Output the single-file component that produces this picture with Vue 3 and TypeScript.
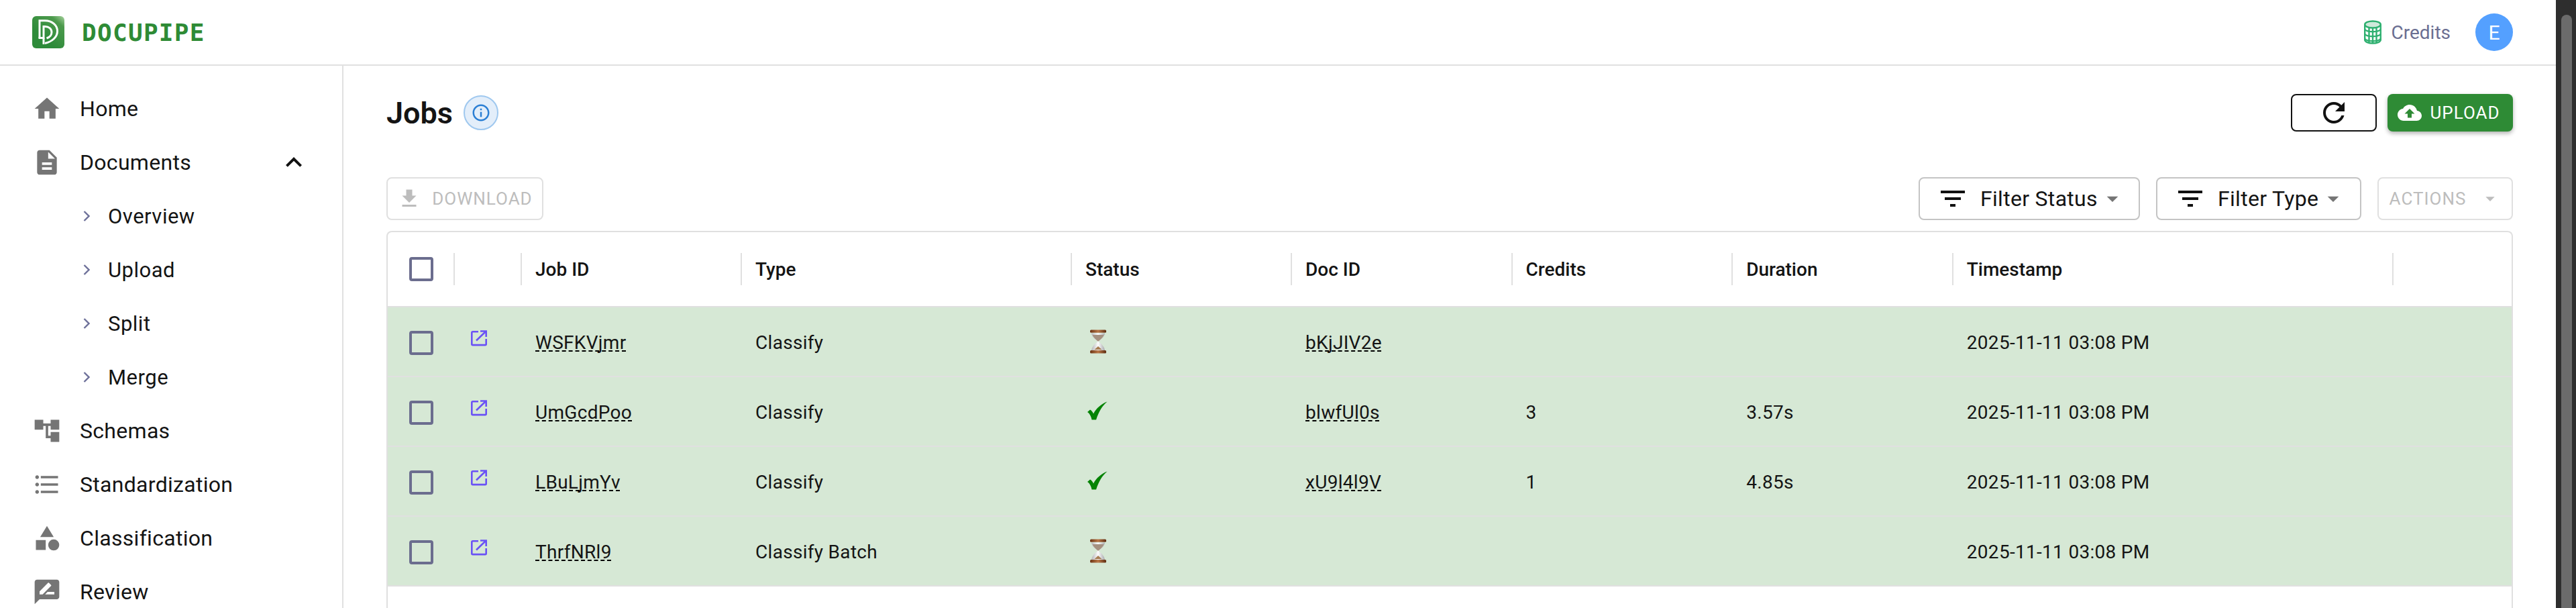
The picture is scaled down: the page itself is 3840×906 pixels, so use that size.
<script setup lang="ts">
interface NavItem {
  label: string;
  icon?: string;
  sub?: boolean;
}

const nav: NavItem[] = [
  { label: 'Home', icon: 'M10 20v-6h4v6h5v-8h3L12 3 2 12h3v8z' },
  { label: 'Documents', icon: 'M14 2H6c-1.1 0-1.99.9-1.99 2L4 20c0 1.1.89 2 1.99 2H18c1.1 0 2-.9 2-2V8l-6-6zm2 16H8v-2h8v2zm0-4H8v-2h8v2zm-3-5V3.5L18.5 9H13z' },
  { label: 'Overview', sub: true },
  { label: 'Upload', sub: true },
  { label: 'Split', sub: true },
  { label: 'Merge', sub: true },
  { label: 'Schemas', icon: 'M22 11V3h-7v3H9V3H2v8h7V8h2v10h4v3h7v-8h-7v3h-2V8h2v3z' },
  { label: 'Standardization', icon: 'M4 10.5c-.83 0-1.5.67-1.5 1.5s.67 1.5 1.5 1.5 1.5-.67 1.5-1.5-.67-1.5-1.5-1.5zm0-6c-.83 0-1.5.67-1.5 1.5S3.17 7.5 4 7.5 5.5 6.83 5.5 6 4.83 4.5 4 4.5zm0 12c-.83 0-1.5.68-1.5 1.5s.68 1.5 1.5 1.5 1.5-.68 1.5-1.5-.67-1.5-1.5-1.5zM7 19h14v-2H7v2zm0-6h14v-2H7v2zm0-8v2h14V5H7z' },
  { label: 'Classification', icon: 'M12 2l-5.5 9h11zM17.5 13a4.5 4.5 0 1 0 0 9 4.5 4.5 0 0 0 0-9zM3 13.5h8v8H3z' },
  { label: 'Review', icon: 'M20 2H4c-1.1 0-2 .9-2 2v18l4-4h14c1.1 0 2-.9 2-2V4c0-1.1-.9-2-2-2zM6 14v-2.47l6.88-6.88c.2-.2.51-.2.71 0l1.77 1.77c.2.2.2.51 0 .71L8.47 14H6zm12 0h-7.5l2-2H18v2z' },
];

const columns = [
  { label: '', width: 100 },
  { label: '', width: 100 },
  { label: 'Job ID', width: 328 },
  { label: 'Type', width: 492 },
  { label: 'Status', width: 328 },
  { label: 'Doc ID', width: 328.6 },
  { label: 'Credits', width: 328.6 },
  { label: 'Duration', width: 328.6 },
  { label: 'Timestamp', width: 656 },
];

const rows = [
  { id: 'WSFKVjmr', type: 'Classify', done: false, doc: 'bKjJIV2e', credits: '', duration: '' },
  { id: 'UmGcdPoo', type: 'Classify', done: true, doc: 'blwfUl0s', credits: '3', duration: '3.57s' },
  { id: 'LBuLjmYv', type: 'Classify', done: true, doc: 'xU9l4l9V', credits: '1', duration: '4.85s' },
  { id: 'ThrfNRl9', type: 'Classify Batch', done: false, doc: '', credits: '', duration: '' },
];

const stamp = '2025-11-11 03:08 PM';
const filterPath = 'M10 18h4v-2h-4v2zM3 6v2h18V6H3zm3 7h12v-2H6v2z';
</script>

<template>
  <div class="page">
    <div class="app">
      <header class="topbar">
        <div class="brand">
          <svg class="logo" viewBox="0 0 48 48">
            <defs>
              <linearGradient id="logoBg" x1="1" y1="0" x2="0.4" y2="0.7">
                <stop offset="0" stop-color="#a9d3a0" />
                <stop offset="0.3" stop-color="#4c9a4c" />
                <stop offset="1" stop-color="#2e8b3a" />
              </linearGradient>
            </defs>
            <rect width="48" height="48" rx="6" fill="url(#logoBg)" />
            <path d="M11 32.500V6.700H19C30 6.700 37.500 14 37.500 22.500C37.500 31 30 38 19 40.500" fill="none" stroke="#fff" stroke-width="3" />
            <path d="M9.500 32.500H17V15.500H19C25 15.500 29 19 29 24C29 28.500 26 31.500 21.500 33" fill="none" stroke="#fff" stroke-width="3" />
            <path d="M17 32.500V42" fill="none" stroke="#fff" stroke-width="3" />
          </svg>
          <span class="brand-name">DOCUPIPE</span>
        </div>
        <div class="account">
          <svg class="coin" viewBox="0 0 26 36" fill="none" stroke="#2fb070" stroke-width="2.400">
            <ellipse cx="13" cy="6.500" rx="11.800" ry="5" fill="#cfe9da" />
            <path d="M1.200 6.500v23c0 2.800 5.300 5 11.800 5s11.800-2.200 11.800-5v-23" />
            <path d="M1.200 14c2 2.200 6.300 3.200 11.800 3.200S22.800 16.200 24.800 14M1.200 21c2 2.200 6.300 3.200 11.800 3.200S22.800 23.200 24.800 21M1.200 28c2 2.200 6.300 3.200 11.800 3.200S22.800 30.200 24.800 28" />
            <path d="M7.500 11v23M18.500 11v23M13 12v22" />
          </svg>
          <span class="credits-link">Credits</span>
          <div class="avatar">E</div>
        </div>
      </header>

      <div class="body">
        <aside class="sidebar">
          <div v-for="item in nav" :key="item.label" class="nav-item" :class="{ sub: item.sub }">
            <svg v-if="item.sub" class="chevron" viewBox="0 0 10 16" fill="none" stroke="#6d7099" stroke-width="2.400">
              <path d="M1.500 1L8.500 8L1.500 15" />
            </svg>
            <svg v-else class="nav-icon" viewBox="0 0 24 24"><path :d="item.icon" /></svg>
            <span class="nav-label">{{ item.label }}</span>
            <svg v-if="item.label === 'Documents'" class="expand" viewBox="0 0 24 24">
              <path d="M12 8l-6 6 1.410 1.410L12 10.830l4.590 4.580L18 14z" />
            </svg>
          </div>
        </aside>

        <main class="content">
          <div class="title-row">
            <div class="title-left">
              <h1>Jobs</h1>
              <div class="info">
                <svg viewBox="0 0 24 24" width="30" height="30">
                  <path fill="#2b7fd4" d="M11 7h2v2h-2zm0 4h2v6h-2zm1-9C6.480 2 2 6.480 2 12s4.480 10 10 10 10-4.480 10-10S17.520 2 12 2zm0 18c-4.410 0-8-3.590-8-8s3.590-8 8-8 8 3.590 8 8-3.590 8-8 8z" />
                </svg>
              </div>
            </div>
            <div class="title-actions">
              <button class="refresh">
                <svg viewBox="0 0 24 24" width="48" height="48">
                  <path fill="#111" d="M17.650 6.350C16.200 4.900 14.210 4 12 4c-4.420 0-7.990 3.580-7.990 8s3.570 8 7.990 8c3.730 0 6.840-2.550 7.730-6h-2.080c-.82 2.330-3.040 4-5.650 4-3.310 0-6-2.690-6-6s2.690-6 6-6c1.660 0 3.140.69 4.220 1.780L13 11h7V4l-2.350 2.350z" />
                </svg>
              </button>
              <button class="upload">
                <svg viewBox="0 0 24 24" width="36" height="36">
                  <path fill="#fff" d="M19.350 10.040C18.670 6.590 15.640 4 12 4 9.110 4 6.600 5.640 5.350 8.040 2.340 8.360 0 10.910 0 14c0 3.310 2.690 6 6 6h13c2.760 0 5-2.240 5-5 0-2.640-2.050-4.780-4.650-4.960zM14 13v4h-4v-4H7l5-5 5 5h-3z" />
                </svg>
                UPLOAD
              </button>
            </div>
          </div>

          <div class="toolbar">
            <button class="btn-disabled download">
              <svg viewBox="0 0 24 24" width="36" height="36">
                <path fill="#bdbdbd" d="M19 9h-4V3H9v6H5l7 7 7-7zM5 18v2h14v-2H5z" />
              </svg>
              DOWNLOAD
            </button>
            <div class="toolbar-right">
              <button class="filter status">
                <svg viewBox="0 0 24 24" width="48" height="48"><path fill="#111" :d="filterPath" /></svg>
                <span class="filter-label">Filter Status</span>
                <svg viewBox="0 0 24 24" width="40" height="40"><path fill="#757575" d="M7 10l5 5 5-5z" /></svg>
              </button>
              <button class="filter type">
                <svg viewBox="0 0 24 24" width="48" height="48"><path fill="#111" :d="filterPath" /></svg>
                <span class="filter-label">Filter Type</span>
                <svg viewBox="0 0 24 24" width="40" height="40"><path fill="#757575" d="M7 10l5 5 5-5z" /></svg>
              </button>
              <button class="btn-disabled actions">
                ACTIONS
                <svg viewBox="0 0 24 24" width="32" height="32"><path fill="#bdbdbd" d="M7 10l5 5 5-5z" /></svg>
              </button>
            </div>
          </div>

          <div class="grid">
            <div class="head-row">
              <div v-for="(col, i) in columns" :key="i" class="head-cell" :style="{ width: col.width + 'px' }">
                <span v-if="i === 0" class="check"></span>
                <span v-else>{{ col.label }}</span>
              </div>
            </div>
            <div v-for="row in rows" :key="row.id" class="data-row">
              <div class="cell" :style="{ width: columns[0].width + 'px' }"><span class="check"></span></div>
              <div class="cell link-cell" :style="{ width: columns[1].width + 'px' }">
                <svg viewBox="0 0 24 24" width="24" height="24" fill="none" stroke="#6a52f5" stroke-width="2.600">
                  <path d="M11 2.300H2.700a1.400 1.400 0 0 0-1.400 1.400v17a1.400 1.400 0 0 0 1.400 1.400h18.600a1.400 1.400 0 0 0 1.400-1.400V13" />
                  <path d="M8 15.500L21.500 2.500M14 1.500h8.700V10" />
                </svg>
              </div>
              <div class="cell" :style="{ width: columns[2].width + 'px' }"><span class="dashed">{{ row.id }}</span></div>
              <div class="cell" :style="{ width: columns[3].width + 'px' }">{{ row.type }}</div>
              <div class="cell" :style="{ width: columns[4].width + 'px' }">
                <svg v-if="row.done" class="tick" viewBox="0 0 30 28" width="30" height="28">
                  <path fill="#058305" d="M29.500 0.500C22 7 17 15 13 27.500H6.500C5.500 22 3 18 0 16L4 12.500C6 13.500 8 16 9 18.500C13 10.500 21 3.500 29.500 0.500z" />
                </svg>
                <svg v-else class="hourglass" viewBox="0 0 24 36" width="24" height="36">
                  <defs>
                    <linearGradient id="wood" x1="0" y1="0" x2="1" y2="0">
                      <stop offset="0" stop-color="#6b3414" />
                      <stop offset="0.5" stop-color="#b97748" />
                      <stop offset="1" stop-color="#5d2c10" />
                    </linearGradient>
                    <linearGradient id="glass" x1="0" y1="0" x2="1" y2="0">
                      <stop offset="0" stop-color="#b5b5b8" />
                      <stop offset="0.5" stop-color="#fdfdfd" />
                      <stop offset="1" stop-color="#a8a8ac" />
                    </linearGradient>
                  </defs>
                  <path d="M2 5.500C2.500 10 6 14 11 17.500V18.500C6 22 2.500 26.500 2 31H22C21.500 26.500 18 22 13 18.500V17.500C18 14 21.500 10 22 5.500z" fill="url(#glass)" />
                  <path d="M3.500 8H20.500C19.500 11.500 16 14.800 12.700 17.500H11.300C8 14.800 4.500 11.500 3.500 8z" fill="#a59180" />
                  <path d="M6.500 30L12 25L17.500 30z" fill="#a67c52" />
                  <rect x="0" y="0.500" width="24" height="4.200" rx="1.500" fill="url(#wood)" />
                  <rect x="0" y="31" width="24" height="4.500" rx="1.500" fill="url(#wood)" />
                </svg>
              </div>
              <div class="cell" :style="{ width: columns[5].width + 'px' }"><span v-if="row.doc" class="dashed">{{ row.doc }}</span></div>
              <div class="cell" :style="{ width: columns[6].width + 'px' }">{{ row.credits }}</div>
              <div class="cell" :style="{ width: columns[7].width + 'px' }">{{ row.duration }}</div>
              <div class="cell" :style="{ width: columns[8].width + 'px' }">{{ stamp }}</div>
            </div>
          </div>
        </main>
      </div>
    </div>

    <div class="scrollbar"><div class="thumb"></div></div>
  </div>
</template>

<style>
html,
body {
  margin: 0;
  overflow: hidden;
}
</style>

<style scoped>
.page {
  display: flex;
  width: 3840px;
  height: 906px;
  overflow: hidden;
  background: #fff;
  color: #141414;
  font-family: Roboto, "Liberation Sans", sans-serif;
}

.app {
  flex: 1;
  min-width: 0;
  display: flex;
  flex-direction: column;
}

.scrollbar {
  width: 30px;
  background: #2e2e2e;
  padding: 22px 6px 0 8px;
  box-sizing: border-box;
}

.thumb {
  height: 1000px;
  border-radius: 8px;
  background: #6b6b6b;
}

.topbar {
  flex: none;
  height: 96px;
  border-bottom: 2px solid #e0e0e0;
  padding: 0 64px 0 48px;
  display: flex;
  align-items: center;
  justify-content: space-between;
}

.brand {
  display: flex;
  align-items: center;
  gap: 26px;
}

.logo {
  width: 48px;
  height: 48px;
}

.brand-name {
  font-family: "DejaVu Sans Mono", "Liberation Mono", monospace;
  font-size: 36px;
  font-weight: 700;
  letter-spacing: 1.300px;
  color: #2e8b35;
}

.account {
  display: flex;
  align-items: center;
}

.coin {
  width: 26px;
  height: 36px;
  margin-right: 14px;
}

.credits-link {
  font-size: 28px;
  color: #6b6f92;
  margin-right: 37px;
}

.avatar {
  width: 56px;
  height: 56px;
  border-radius: 50%;
  background: #54a0ff;
  color: #fff;
  font-size: 30px;
  display: flex;
  align-items: center;
  justify-content: center;
}

.body {
  flex: 1;
  min-height: 0;
  display: flex;
}

.sidebar {
  flex: none;
  width: 510px;
  border-right: 2px solid #e0e0e0;
  padding-top: 24px;
}

.nav-item {
  height: 80px;
  display: flex;
  align-items: center;
  padding-left: 48px;
  font-size: 32px;
  letter-spacing: 0.300px;
}

.nav-item.sub {
  padding-left: 124px;
  font-size: 31px;
  letter-spacing: 0.500px;
}

.nav-icon {
  width: 44px;
  height: 44px;
  fill: #757575;
  margin-right: 27px;
}

.chevron {
  width: 10px;
  height: 16px;
  margin-right: 27px;
}

.expand {
  width: 48px;
  height: 48px;
  margin-left: auto;
  margin-right: 48px;
  fill: #111;
}

.content {
  flex: 1;
  min-width: 0;
  padding: 42px 64px 0;
}

.title-row {
  display: flex;
  align-items: center;
  justify-content: space-between;
  height: 56px;
}

.title-left {
  display: flex;
  align-items: center;
  gap: 16px;
}

h1 {
  margin: 0;
  font-size: 45px;
  font-weight: 600;
}

.info {
  width: 52px;
  height: 52px;
  box-sizing: border-box;
  border-radius: 50%;
  border: 2px solid #9fc8ef;
  background: #e3eefa;
  display: flex;
  align-items: center;
  justify-content: center;
}

.title-actions {
  display: flex;
  gap: 16px;
}

button {
  font-family: inherit;
  box-sizing: border-box;
  background: #fff;
  display: flex;
  align-items: center;
  justify-content: center;
  padding: 0;
}

.refresh {
  width: 128px;
  height: 56px;
  border: 2px solid #111;
  border-radius: 8px;
}

.upload {
  width: 187px;
  height: 56px;
  border: 0;
  border-radius: 8px;
  background: #2e8b35;
  color: #fff;
  font-size: 26px;
  font-weight: 450;
  letter-spacing: 1px;
  gap: 12px;
  padding-right: 4px;
  box-shadow: 0 3px 6px rgba(0, 0, 0, 0.3);
}

.toolbar {
  margin-top: 68px;
  display: flex;
  align-items: center;
  justify-content: space-between;
}

.toolbar-right {
  display: flex;
  gap: 24px;
}

.btn-disabled {
  height: 64px;
  border: 2px solid #e0e0e0;
  border-radius: 8px;
  color: #bdbdbd;
  font-size: 26px;
  font-weight: 450;
  letter-spacing: 1px;
}

.download {
  width: 234px;
  gap: 16px;
}

.actions {
  width: 202px;
  gap: 20px;
}

.filter {
  height: 64px;
  border: 2px solid #c4c4c4;
  border-radius: 8px;
  font-size: 32px;
  letter-spacing: 0.300px;
  color: #141414;
  justify-content: flex-start;
  padding-left: 25px;
}

.filter-label {
  margin: 0 2px 0 17px;
}

.filter.status {
  width: 330px;
}

.filter.type {
  width: 306px;
}

.grid {
  margin-top: 16px;
  border: 2px solid #e0e0e0;
  border-bottom: 0;
  border-radius: 8px 8px 0 0;
  height: 600px;
  box-sizing: border-box;
  overflow: hidden;
}

.head-row {
  height: 112px;
  display: flex;
  align-items: center;
  border-bottom: 2px solid #e0e0e0;
  box-sizing: border-box;
}

.head-cell {
  flex: none;
  height: 48px;
  box-sizing: border-box;
  padding: 0 20px;
  border-right: 2px solid #e0e0e0;
  display: flex;
  align-items: center;
  font-size: 28px;
  font-weight: 500;
}

.head-cell:first-child,
.cell:first-child {
  padding: 0 0 0 32px;
}

.data-row {
  height: 104px;
  display: flex;
  align-items: center;
  background: #d6e8d5;
  border-bottom: 2px solid #e0e0e0;
  box-sizing: border-box;
  padding-top: 3px;
}

.cell {
  flex: none;
  box-sizing: border-box;
  padding: 0 20px;
  font-size: 28px;
  letter-spacing: 0.300px;
  display: flex;
  align-items: center;
}

.link-cell {
  padding-left: 24px;
  margin-top: -14px;
}

.check {
  width: 36px;
  height: 36px;
  box-sizing: border-box;
  border: 4px solid #6b6d8e;
  border-radius: 4px;
}

.dashed {
  text-decoration: underline dashed 2px #000;
  text-decoration-skip-ink: none;
  text-underline-offset: 2px;
}

.tick {
  margin-left: 3px;
  margin-top: -6px;
}

.hourglass {
  margin-left: 7px;
  margin-top: -4px;
}
</style>
